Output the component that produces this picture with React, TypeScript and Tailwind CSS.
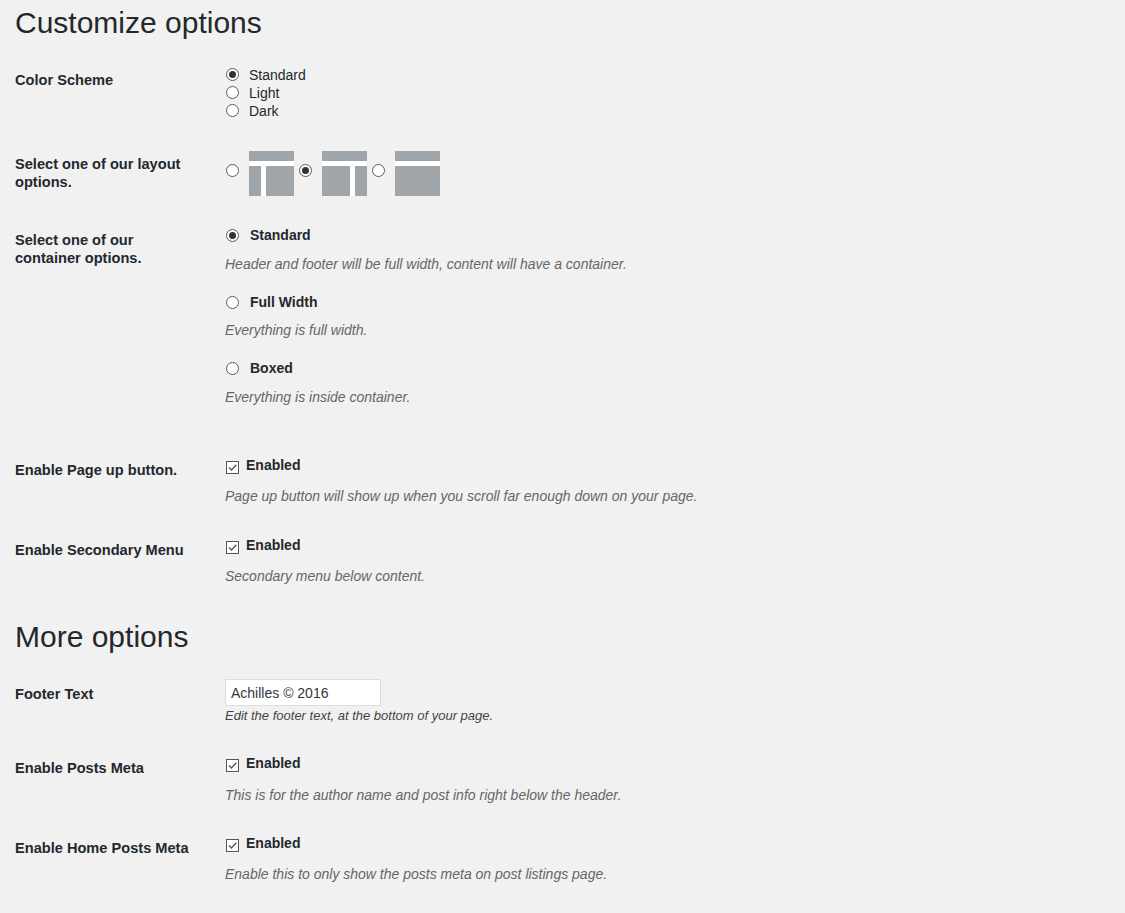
import type { ReactNode } from 'react'

function Radio({ checked = false, className = '' }: { checked?: boolean; className?: string }) {
  return (
    <span className={`flex h-[13px] w-[13px] shrink-0 items-center justify-center rounded-full border border-[#5a5a5a] bg-white ${className}`}>
      {checked && <span className="block h-[7px] w-[7px] rounded-full bg-[#333]" />}
    </span>
  )
}

function Checkbox({ className = '' }: { className?: string }) {
  return (
    <svg width="13" height="13" viewBox="0 0 13 13" className={`shrink-0 ${className}`}>
      <rect x="0.5" y="0.5" width="12" height="12" fill="#fff" stroke="#555" />
      <polyline points="3,6.5 5.5,9 10.3,3.8" fill="none" stroke="#555" strokeWidth="1.3" />
    </svg>
  )
}

function LayoutIcon({ kind }: { kind: 'left' | 'right' | 'full' }) {
  return (
    <svg width="45" height="45" viewBox="0 0 45 45" className="shrink-0">
      <rect width="45" height="45" fill="#fff" />
      <rect width="45" height="10" fill="#a0a5aa" />
      {kind === 'left' && (
        <>
          <rect x="0" y="15" width="12" height="30" fill="#a0a5aa" />
          <rect x="17" y="15" width="28" height="30" fill="#a0a5aa" />
        </>
      )}
      {kind === 'right' && (
        <>
          <rect x="0" y="15" width="28" height="30" fill="#a0a5aa" />
          <rect x="33" y="15" width="12" height="30" fill="#a0a5aa" />
        </>
      )}
      {kind === 'full' && <rect x="0" y="15" width="45" height="30" fill="#a0a5aa" />}
    </svg>
  )
}

function Row({ label, children, content = 'pt-[15px] pb-[15px]' }: { label: string; children: ReactNode; content?: string }) {
  return (
    <div className="flex">
      <div className="w-[210px] shrink-0 pt-[20px] pb-[20px] pr-[30px] text-[14.6px] font-bold leading-[18px]">{label}</div>
      <div className={content}>{children}</div>
    </div>
  )
}

function Enabled({ desc, descGap = 'mt-[13px]' }: { desc: string; descGap?: string }) {
  return (
    <>
      <div className="flex h-[18px] items-start">
        <Checkbox className="ml-[1px] mt-[5px]" />
        <span className="ml-[7px] text-[14px] font-bold leading-[18px]">Enabled</span>
      </div>
      <p className={`${descGap} text-[14px] italic leading-[18px] text-[#666]`}>{desc}</p>
    </>
  )
}

export default function App() {
  const schemes = [
    { name: 'Standard', checked: true },
    { name: 'Light', checked: false },
    { name: 'Dark', checked: false },
  ]

  const containers = [
    { name: 'Standard', desc: 'Header and footer will be full width, content will have a container.', checked: true, top: 'mt-0', descTop: 'mt-[11px]' },
    { name: 'Full Width', desc: 'Everything is full width.', checked: false, top: 'mt-[20px]', descTop: 'mt-[10px]' },
    { name: 'Boxed', desc: 'Everything is inside container.', checked: false, top: 'mt-[20px]', descTop: 'mt-[11px]' },
  ]

  return (
    <div className="min-h-screen bg-[#f1f1f1] pl-[15px] font-['Liberation_Sans',Arial,sans-serif] text-[#23282d]">
      <h1 className="pt-[3px] text-[30px] font-normal leading-[40px]">Customize options</h1>

      <div className="mt-[7.5px]">
        <Row label="Color Scheme">
          {schemes.map(s => (
            <div key={s.name} className="flex h-[18px] items-center">
              <Radio checked={s.checked} className="ml-[1px]" />
              <span className="ml-[10px] text-[14px] leading-[18px]">{s.name}</span>
            </div>
          ))}
        </Row>

        <Row label="Select one of our layout options." content="pt-[16.5px] pb-[15px]">
          <div className="flex items-start">
            <Radio className="ml-[1px] mt-[13px]" />
            <span className="ml-[10px]"><LayoutIcon kind="left" /></span>
            <Radio checked className="ml-[5px] mt-[13px]" />
            <span className="ml-[10px]"><LayoutIcon kind="right" /></span>
            <Radio className="ml-[5px] mt-[13px]" />
            <span className="ml-[10px]"><LayoutIcon kind="full" /></span>
          </div>
        </Row>

        <Row label="Select one of our container options." content="pt-[15px] pb-[35px]">
          {containers.map(c => (
            <div key={c.name} className={c.top}>
              <div className="flex h-[18px] items-center">
                <Radio checked={c.checked} className="ml-[1px]" />
                <span className="ml-[11px] text-[14px] font-bold leading-[18px]">{c.name}</span>
              </div>
              <p className={`${c.descTop} text-[14px] italic leading-[18px] text-[#666]`}>{c.desc}</p>
            </div>
          ))}
        </Row>

        <Row label="Enable Page up button." content="pt-[15px] pb-[16px]">
          <Enabled desc="Page up button will show up when you scroll far enough down on your page." />
        </Row>

        <Row label="Enable Secondary Menu">
          <Enabled desc="Secondary menu below content." />
        </Row>
      </div>

      <h2 className="mt-[17px] mb-[8px] text-[30px] font-normal leading-[40px]">More options</h2>

      <Row label="Footer Text" content="pt-[14px] pb-[15px]">
        <input
          type="text"
          defaultValue="Achilles © 2016"
          className="block h-[27px] w-[156px] border border-[#ddd] bg-white px-[5px] text-[14px] text-[#32373c] outline-none"
        />
        <p className="mt-[2px] text-[13px] italic leading-[16px] text-[#444]">Edit the footer text, at the bottom of your page.</p>
      </Row>

      <Row label="Enable Posts Meta">
        <Enabled desc="This is for the author name and post info right below the header." descGap="mt-[14px]" />
      </Row>

      <Row label="Enable Home Posts Meta">
        <Enabled desc="Enable this to only show the posts meta on post listings page." />
      </Row>
    </div>
  )
}
